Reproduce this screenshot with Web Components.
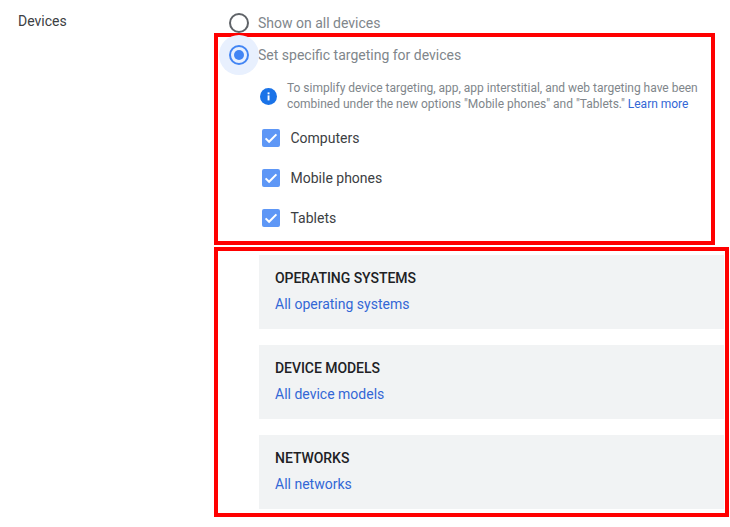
<!DOCTYPE html>
<html>
<head>
<meta charset="utf-8">
<title>Devices</title>
<style>
	html, body { margin: 0; padding: 0; background: #fff; }
	body { font-family: Roboto, "Liberation Sans", sans-serif; font-size: 14px; width: 730px; height: 527px; overflow: hidden; }
</style>
</head>
<body>
<device-panel label="Devices">
	<radio-row>Show on all devices</radio-row>
	<red-box slot="targeting" class="first">
		<radio-row checked>Set specific targeting for devices</radio-row>
		<info-note>To simplify device targeting, app, app interstitial, and web targeting have been<br>combined under the new options "Mobile phones" and "Tablets." <a href="#" style="color:#3367d6;text-decoration:none">Learn more</a></info-note>
		<check-row>Computers</check-row>
		<check-row>Mobile phones</check-row>
		<check-row>Tablets</check-row>
	</red-box>
	<red-box slot="targeting" class="second">
		<target-card title="OPERATING SYSTEMS" link="All operating systems"></target-card>
		<target-card title="DEVICE MODELS" link="All device models"></target-card>
		<target-card title="NETWORKS" link="All networks"></target-card>
	</red-box>
</device-panel>

<script>
class DevicePanel extends HTMLElement {
	constructor() {
		super();
		this.attachShadow({ mode: "open" });
		this.shadowRoot.innerHTML = `
			<style>
			:host { display: grid; grid-template-columns: 214px 1fr; width: 730px; }
			.label { padding: 12px 0 0 18px; color: #3c4043; line-height: 18px; }
			.col { display: flex; flex-direction: column; }
			.top { height: 33px; padding-left: 14.5px; box-sizing: border-box; padding-top: 13px; }
			</style>
			<div class="label">${this.getAttribute("label")}</div>
			<div class="col">
				<div class="top"><slot></slot></div>
				<slot name="targeting"></slot>
			</div>
		`;
	}
}

class RadioRow extends HTMLElement {
	constructor() {
		super();
		this.attachShadow({ mode: "open" });
		const checked = this.hasAttribute("checked");
		this.shadowRoot.innerHTML = `
			<style>
			:host { display: flex; align-items: center; gap: 9.5px; height: 20px; color: #80868b; font-size: 14px; }
			.radio { position: relative; width: 20px; height: 20px; flex: none; }
			.halo { position: absolute; left: -10px; top: -10px; width: 40px; height: 40px; border-radius: 50%; background: #e8f0fe; }
			svg { position: relative; display: block; }
			</style>
			<div class="radio">
				${checked ? '<div class="halo"></div>' : ''}
				<svg width="20" height="20" viewBox="0 0 20 20">
					<circle cx="10" cy="10" r="9" fill="none" stroke="${checked ? '#4285f4' : '#5f6368'}" stroke-width="2"/>
					${checked ? '<circle cx="10" cy="10" r="5" fill="#4285f4"/>' : ''}
				</svg>
			</div>
			<span><slot></slot></span>
		`;
	}
}

class RedBox extends HTMLElement {
	constructor() {
		super();
		this.attachShadow({ mode: "open" });
		this.shadowRoot.innerHTML = `
			<style>
			:host { display: flex; flex-direction: column; box-sizing: border-box; border: 4px solid #f00; }
			:host(.first) { width: 501px; height: 212px; padding: 8px 0 0 10.5px; }
			:host(.second) { width: 515px; height: 270px; margin-top: 2px; padding: 4px 1px 0 41px; gap: 16px; }
			</style>
			<slot></slot>
		`;
	}
}

class InfoNote extends HTMLElement {
	constructor() {
		super();
		this.attachShadow({ mode: "open" });
		this.shadowRoot.innerHTML = `
			<style>
			:host { display: flex; align-items: center; margin: 15px 0 6px 31.5px; color: #80868b; font-size: 12px; line-height: 16px; letter-spacing: -0.012px; }
			svg { flex: none; margin-right: 10px; }
			span { white-space: nowrap; }
			</style>
			<svg width="17" height="17" viewBox="0 0 17 17">
				<circle cx="8.5" cy="8.5" r="8.5" fill="#1a73e8"/>
				<rect x="7.6" y="7.4" width="1.9" height="5" fill="#fff"/>
				<rect x="7.6" y="4.4" width="1.9" height="1.9" fill="#fff"/>
			</svg>
			<span><slot></slot></span>
		`;
	}
}

class CheckRow extends HTMLElement {
	constructor() {
		super();
		this.attachShadow({ mode: "open" });
		this.shadowRoot.innerHTML = `
			<style>
			:host { display: flex; align-items: center; height: 40px; margin-left: 33px; color: #3c4043; font-size: 14px; }
			svg { flex: none; margin-right: 11px; }
			</style>
			<svg width="18" height="18" viewBox="0 0 18 18">
				<rect width="18" height="18" rx="2" fill="#5e97f6"/>
				<path d="M3.6 9.4 L7.1 12.8 L14.4 5.4" fill="none" stroke="#fff" stroke-width="2"/>
			</svg>
			<span><slot></slot></span>
		`;
	}
}

class TargetCard extends HTMLElement {
	constructor() {
		super();
		this.attachShadow({ mode: "open" });
		this.shadowRoot.innerHTML = `
			<style>
			:host { display: block; box-sizing: border-box; height: 74px; padding: 14px 16px 0; background: #f1f3f4; font-size: 14px; }
			.title { font-weight: 500; color: #202124; line-height: 18px; letter-spacing: -0.05px; }
			.link { margin-top: 8px; color: #3367d6; line-height: 18px; }
			</style>
			<div class="title">${this.getAttribute("title")}</div>
			<div class="link">${this.getAttribute("link")}</div>
		`;
	}
}

customElements.define("device-panel", DevicePanel);
customElements.define("radio-row", RadioRow);
customElements.define("red-box", RedBox);
customElements.define("info-note", InfoNote);
customElements.define("check-row", CheckRow);
customElements.define("target-card", TargetCard);
</script>
</body>
</html>
